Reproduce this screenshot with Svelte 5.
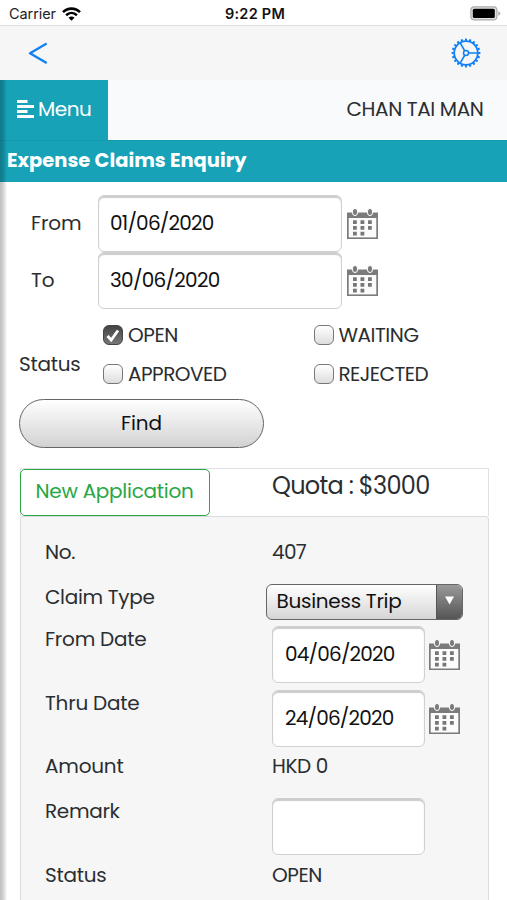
<script>
  const filters = [
    { label: 'OPEN', width: 50, checked: true },
    { label: 'WAITING', width: 80, checked: false },
    { label: 'APPROVED', width: 98.5, checked: false },
    { label: 'REJECTED', width: 89.5, checked: false }
  ];
  const teeth = Array.from({ length: 20 }, (_, i) => i * 18);

  function fit(node, width) {
    const natural = node.getBoundingClientRect().width;
    const count = node.textContent.length;
    node.style.letterSpacing = `${(width - natural) / count}px`;
  }
</script>

{#snippet calendar()}
  <svg class="calendar" viewBox="0 0 31 32" width="31" height="32">
    <path d="M0 4.500H31V31H0Z" fill="#7b7b7b" />
    <path d="M1.700 10H29.300V29.400H1.700Z" fill="#fbfbfb" />
    <ellipse cx="8" cy="4" rx="2.700" ry="3.600" fill="#7b7b7b" stroke="#fff" stroke-width="1" />
    <ellipse cx="23" cy="4" rx="2.700" ry="3.600" fill="#7b7b7b" stroke="#fff" stroke-width="1" />
    <path d="M6 12.300h3.800v3.800H6zM13.500 12.300h3.800v3.800h-3.800zM21 12.300h3.800v3.800h-3.800zM6 18h3.800v3.800H6zM13.500 18h3.800v3.800h-3.800zM21 18h3.800v3.800h-3.800zM6 23.700h3.800v3.800H6zM13.500 23.700h3.800v3.800h-3.800z" fill="#777" />
  </svg>
{/snippet}

<div class="phone">
  <header class="statusbar">
    <div class="carrier">
      <span use:fit={47}>Carrier</span>
      <svg width="19" height="14" viewBox="0 0 19 14">
        <g fill="none" stroke="#000" stroke-width="2.6">
          <path d="M1 5.200C5.800 0.400 13.200 0.400 18 5.200" />
          <path d="M4.100 8.300C7.300 5.200 11.700 5.200 14.900 8.300" />
        </g>
        <path d="M6.500 10.700C8.200 9.100 10.800 9.100 12.500 10.700L9.500 13.700Z" />
      </svg>
    </div>
    <span class="time" use:fit={60}>9:22 PM</span>
    <svg class="battery" width="31" height="15" viewBox="0 0 31 15">
      <rect x="0.900" y="0.900" width="26" height="13" rx="3.500" fill="#e2e2e2" stroke="#aaa" stroke-width="1.200" />
      <rect x="2.800" y="2.800" width="22" height="9.300" rx="1.500" />
      <path d="M28.300 5.200Q30.300 6 30.300 7.500Q30.300 9 28.300 9.800Z" fill="#aaa" />
    </svg>
  </header>

  <nav>
    <svg width="20" height="22" viewBox="0 0 20 22">
      <path d="M18.700 1.500L2 11.300L18.700 21.100" fill="none" stroke="#1280f5" stroke-width="2.300" stroke-linejoin="round" />
    </svg>
    <svg width="30" height="30" viewBox="-15 -15 30 30" fill="none" stroke="#1280f5">
      <circle r="11.800" stroke-width="1.800" />
      {#each teeth as angle}
        <path d="M12.300 0H14.400" stroke-width="2.100" transform="rotate({angle})" />
      {/each}
      <circle r="2.500" stroke-width="1.500" />
      <path d="M2.500 0H11.500M-1.250 -2.200L-5.800 -10.100M-1.250 2.200L-5.800 10.100" stroke-width="1.700" />
    </svg>
  </nav>

  <main>
    <div class="topbar">
      <button class="menu">
        <svg width="18" height="18" viewBox="0 0 18 18" fill="#fff">
          <path d="M1 0H11.500V2.900H1ZM1 5H18V7.900H1ZM1 10H11.500V12.900H1ZM1 15H18V17.900H1Z" />
        </svg>
        <span use:fit={53.5}>Menu</span>
      </button>
      <div class="user"><span use:fit={137}>CHAN TAI MAN</span></div>
    </div>
    <h1><span use:fit={239.5}>Expense Claims Enquiry</span></h1>

    <section class="search">
      <div class="daterow">
        <span class="label"><span use:fit={50.5}>From</span></span>
        <div class="field wide"><span use:fit={103.5}>01/06/2020</span></div>
        {@render calendar()}
      </div>
      <div class="daterow">
        <span class="label"><span use:fit={23.5}>To</span></span>
        <div class="field wide"><span use:fit={109.5}>30/06/2020</span></div>
        {@render calendar()}
      </div>
      <div class="statusrow">
        <span class="statuslabel"><span use:fit={61.5}>Status</span></span>
        <div class="checks">
          {#each filters as filter}
            <div class="check">
              <span class="box" class:checked={filter.checked}>
                {#if filter.checked}
                  <svg width="14" height="15" viewBox="0 0 14 15"><path d="M1.500 8L5.200 12L12 2.500" fill="none" stroke="#fff" stroke-width="2.800" /></svg>
                {/if}
              </span>
              <span use:fit={filter.width}>{filter.label}</span>
            </div>
          {/each}
        </div>
      </div>
      <button class="find"><span use:fit={41}>Find</span></button>
    </section>

    <section class="claims">
      <div class="toolbar">
        <button class="new"><span use:fit={158}>New Application</span></button>
        <div class="quota"><span use:fit={157.5}>Quota : $3000</span></div>
      </div>
      <div class="card">
        <div class="row no">
          <div class="key"><span use:fit={30}>No.</span></div>
          <div class="value"><span use:fit={34}>407</span></div>
        </div>
        <div class="row type">
          <div class="key"><span use:fit={109.5}>Claim Type</span></div>
          <div class="select">
            <div class="choice"><span use:fit={125}>Business Trip</span></div>
            <div class="arrow"><svg width="9" height="9" viewBox="0 0 9 9"><path d="M0 0.500H9L4.500 8.500Z" fill="#fff" /></svg></div>
          </div>
        </div>
        <div class="row date">
          <div class="key"><span use:fit={101.5}>From Date</span></div>
          <div class="field"><span use:fit={109.5}>04/06/2020</span></div>
          {@render calendar()}
        </div>
        <div class="row date">
          <div class="key"><span use:fit={94.5}>Thru Date</span></div>
          <div class="field"><span use:fit={108.5}>24/06/2020</span></div>
          {@render calendar()}
        </div>
        <div class="row amount">
          <div class="key"><span use:fit={78.5}>Amount</span></div>
          <div class="value"><span use:fit={56}>HKD 0</span></div>
        </div>
        <div class="row remark">
          <div class="key"><span use:fit={74.5}>Remark</span></div>
          <div class="field"></div>
        </div>
        <div class="row state">
          <div class="key"><span use:fit={61.5}>Status</span></div>
          <div class="value"><span use:fit={50}>OPEN</span></div>
        </div>
      </div>
    </section>
    <div class="edge"></div>
  </main>
</div>

<style>
  :global(body) { margin: 0; background: #fff; }
  * { box-sizing: border-box; }
  .phone {
    width: 507px; height: 900px; overflow: hidden; display: flex; flex-direction: column;
    font-family: Poppins, Inter, sans-serif; font-size: 20px; line-height: 24px;
    color: #2b2e31; background: #fff; white-space: nowrap;
  }
  svg { display: block; flex: none; }
  button { font: inherit; margin: 0; padding: 0; cursor: pointer; }
  .statusbar {
    height: 26px; flex: none; display: grid; grid-template-columns: 1fr auto 1fr; align-items: center;
    padding: 1px 6px 0 9px; border-bottom: 1px solid #dedede; font-size: 14.5px; color: #222;
    font-family: Inter, sans-serif;
  }
  .carrier { display: flex; align-items: center; gap: 6px; }
  .carrier span { padding-top: 1px; }
  .time { font-weight: 600; color: #111; font-size: 14.5px; padding-top: 1px; }
  .battery { justify-self: end; }
  nav {
    height: 53.500px; flex: none; display: flex; justify-content: space-between; align-items: center;
    padding: 0 26px 0 28px; background: #f7f6f7;
  }
  main { position: relative; flex: 1; min-height: 0; display: flex; flex-direction: column; }
  .topbar { height: 60.500px; flex: none; display: flex; justify-content: space-between; background: #f9fafc; }
  .menu {
    width: 108px; height: 60.500px; display: flex; align-items: center; gap: 4px; padding: 0 0 2px 16px;
    border: 0; background: #17a2b8; color: #fff; text-align: left;
  }
  .user { padding: 17.500px 23.500px 0 0; }
  h1 {
    margin: 0; height: 41.500px; flex: none; display: flex; align-items: center;
    padding: 0 0 1px 7px; font-size: 19.500px; font-weight: 700; color: #fff; background: #17a2b8;
    border-top: 1px solid #1499ae;
  }
  .search { flex: none; padding: 13px 0 0 19px; height: 286.500px; }
  .daterow { display: flex; height: 57.500px; }
  .label { width: 78.500px; padding: 16px 0 0 12px; }
  .field {
    width: 153px; height: 57px; flex: none; display: flex; align-items: center; padding: 0 0 1px 12.500px;
    background: #fff; border: 1.500px solid #d0d0d0; border-radius: 6px; color: #111;
    box-shadow: inset 0 2px 1px #ccc;
  }
  .wide { width: 244px; padding-left: 11.500px; }
  .calendar { margin: 13px 0 0 5px; }
  .statusrow { display: flex; height: 89.500px; }
  .statuslabel { width: 84px; padding-top: 42px; }
  .checks { display: grid; grid-template-columns: 210.500px 170px; grid-template-rows: 39px 39px; padding-top: 6px; }
  .check { display: flex; align-items: center; gap: 5px; }
  .box {
    width: 20px; height: 20px; display: flex; align-items: center; justify-content: center;
    border: 1.500px solid #777; border-radius: 6px; background: linear-gradient(#fff, #ddd);
  }
  .checked { border-color: #444; background: linear-gradient(#444, #777); }
  .find {
    width: 245px; height: 49px; display: flex; align-items: center; justify-content: center;
    border: 1.500px solid #666; border-radius: 25px; background: linear-gradient(#fff, #d2d2d2); color: #111;
    padding-bottom: 2px;
  }
  .claims { flex: 1; min-height: 0; padding: 0 18px 0 19.500px; display: flex; flex-direction: column; }
  .toolbar { height: 48px; flex: none; display: flex; border: 1px solid #dee2e6; border-bottom: 0; }
  .new {
    width: 190px; height: 47px; margin-left: -1px; border: 1.500px solid #28a745; border-radius: 5px;
    background: #fff; color: #28a745; padding: 0 0 3px;
  }
  .quota { font-size: 24px; padding: 5px 0 0 62.500px; }
  .card {
    flex: 1; min-height: 0; overflow: hidden; padding: 22px 0 0 24.500px; background: #f6f6f7;
    border: 1px solid #d9dcde; border-bottom: 0; border-radius: 4px 4px 0 0;
  }
  .row { display: flex; }
  .key { width: 226.500px; flex: none; }
  .value { padding-left: 0.500px; }
  .no { height: 44.500px; }
  .no > div { padding-top: 1px; }
  .type { height: 42.500px; }
  .type .key { width: 221px; padding-top: 1px; }
  .select {
    width: 197px; height: 36px; display: flex; border: 1.500px solid #666; border-radius: 6px; overflow: hidden;
    background: linear-gradient(#fff, #d5d5d5); color: #111;
  }
  .choice { flex: 1; padding: 4px 0 0 9.500px; }
  .arrow {
    width: 26px; display: flex; align-items: center; justify-content: center; padding-bottom: 2px;
    border-left: 1px solid #555; background: linear-gradient(#999, #555);
  }
  .date { height: 63.500px; }
  .date .key { padding-top: 1px; }
  .date .calendar { margin: 13px 0 0 4.500px; }
  .amount { height: 44.500px; }
  .amount > div { padding-top: 1px; }
  .remark { height: 63px; }
  .remark .key { padding-top: 1px; }
  .state > div { padding-top: 2.500px; }
  .edge {
    position: absolute; left: 0; top: 0; bottom: 0; width: 7px; pointer-events: none;
    background: linear-gradient(90deg, rgba(0, 0, 0, 0.25), rgba(0, 0, 0, 0.18) 45%, rgba(0, 0, 0, 0));
  }
</style>
